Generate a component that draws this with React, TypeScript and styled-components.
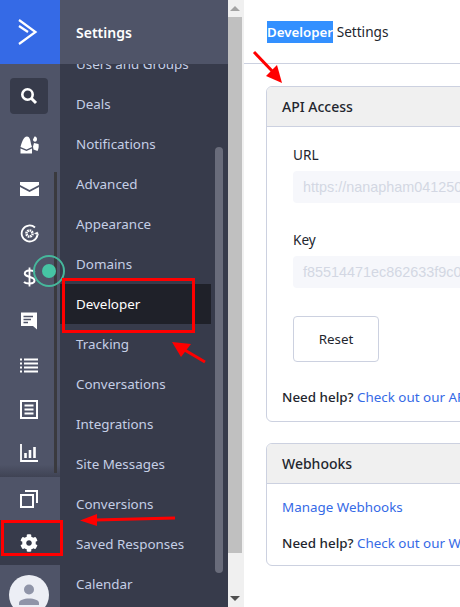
import React from "react";
import styled, { createGlobalStyle } from "styled-components";
import { FaCog } from "react-icons/fa";

const Global = createGlobalStyle`
  html, body { margin: 0; padding: 0; width: 460px; height: 607px; overflow: hidden; background: #fff; }
  * { box-sizing: border-box; }
  body { font-family: "Noto Sans", "Open Sans", sans-serif; }
`;

const Page = styled.div`
  position: relative;
  display: flex;
  width: 460px;
  height: 607px;
  overflow: hidden;
`;

const Rail = styled.nav`
  position: relative;
  z-index: 2;
  flex: 0 0 60px;
  display: flex;
  flex-direction: column;
  background: #4f5468;
`;

const Logo = styled.div`
  flex: none;
  height: 64px;
  background: #356ae6;
  display: flex;
  align-items: center;
  justify-content: center;
  padding-right: 4px;
`;

const RailTop = styled.div`
  flex: 0 0 413px;
  display: flex;
  flex-direction: column;
  align-items: center;
  padding-top: 14px;
  padding-right: 2px;
  background: linear-gradient(#4f5468 97%, #3f4354);
`;

const SearchBox = styled.div`
  flex: none;
  width: 38px;
  height: 36px;
  background: #373b4b;
  border-radius: 4px;
  display: flex;
  align-items: center;
  justify-content: center;
  margin-bottom: 9px;
`;

const RailIcon = styled.div`
  flex: none;
  width: 100%;
  height: 44px;
  display: flex;
  align-items: center;
  justify-content: center;
  color: #fff;
`;

const RailScroll = styled.div`
  position: absolute;
  left: 54px;
  top: 172px;
  width: 3px;
  height: 301px;
  background: #3a3a3e;
`;

const Pages = styled.div`
  flex: none;
  height: 43px;
  padding-right: 2px;
  display: flex;
  align-items: center;
  justify-content: center;
`;

const Cog = styled.div`
  flex: none;
  height: 45px;
  padding-right: 2px;
  background: #373b4b;
  color: #fff;
  display: flex;
  align-items: center;
  justify-content: center;
`;

const AvatarCell = styled.div`
  flex: 1;
  min-height: 0;
  display: flex;
  justify-content: center;
  padding: 10px 2px 0 0;
  overflow: hidden;
`;

const Avatar = styled.div`
  flex: 0 0 40px;
  height: 40px;
  border-radius: 50%;
  background: #eceef5;
  display: flex;
  align-items: center;
  justify-content: center;
`;

const Pulse = styled.div`
  position: absolute;
  left: 33px;
  top: 255px;
  width: 32px;
  height: 32px;
  border: 2px solid #46b89c;
  border-radius: 50%;
  display: flex;
  align-items: center;
  justify-content: center;
  &::after {
    content: "";
    width: 14px;
    height: 14px;
    border-radius: 50%;
    background: #46c5a4;
  }
`;

const Side = styled.aside`
  position: relative;
  flex: 0 0 168px;
  display: flex;
  flex-direction: column;
  background: #373b4b;
  overflow: hidden;
`;

const SideHead = styled.div`
  height: 64px;
  flex: none;
  background: #4f5468;
  color: #fff;
  font-size: 14px;
  font-weight: 600;
  display: flex;
  align-items: center;
  padding-left: 16px;
  position: relative;
  z-index: 1;
`;

const SideList = styled.ul`
  list-style: none;
  margin: -20px 0 0;
  padding: 0 17px 0 0;
`;

const SideItem = styled.li<{ $active?: boolean }>`
  height: 40px;
  line-height: 40px;
  padding-left: 16px;
  font-size: 13.4px;
  white-space: nowrap;
  color: ${(p) => (p.$active ? "#fff" : "#c5cfe6")};
  background: ${(p) => (p.$active ? "#1f2129" : "transparent")};
`;

const SideScroll = styled.div`
  position: absolute;
  left: 155px;
  top: 147px;
  width: 8px;
  height: 426px;
  border-radius: 4px;
  background: #696c7b;
`;

const PageBar = styled.div`
  flex: 0 0 16px;
  display: flex;
  flex-direction: column;
  background: #f0f0f0;
  padding-right: 2px;
`;

const BarBtn = styled.div`
  height: 17px;
  flex: none;
  display: flex;
  align-items: center;
  justify-content: center;
`;

const BarThumb = styled.div`
  height: 536px;
  flex: none;
  background: #c0c0c0;
`;

const BarTrack = styled.div`
  flex: 1;
`;

const Main = styled.main`
  flex: 1;
  min-width: 0;
  overflow: hidden;
  background: #fff;
  color: #23262e;
  font-size: 13.4px;
`;

const TopBar = styled.header`
  height: 64px;
  border-bottom: 1px solid #ccd1e0;
  padding-left: 23px;
  display: flex;
  align-items: center;
  font-size: 13.6px;
  white-space: pre;
`;

const Selected = styled.span`
  background: #3390ff;
  color: #fff;
  font-size: 13.3px;
  font-weight: 600;
  height: 22px;
  line-height: 22px;
`;

const Panels = styled.div`
  padding: 22px 0 0 22px;
  width: 700px;
  display: flex;
  flex-direction: column;
  gap: 21px;
`;

const Panel = styled.section`
  border: 1px solid #ccd1e0;
  border-radius: 6px;
  overflow: hidden;
`;

const PanelHead = styled.div`
  height: 40px;
  background: #f0f0f0;
  border-bottom: 1px solid #ccd1e0;
  padding-left: 15px;
  display: flex;
  align-items: center;
  font-size: 14px;
  font-weight: 500;
`;

const ApiBody = styled.div`
  padding: 17px 15px 0;
  height: 294px;
`;

const Fields = styled.div`
  padding-left: 11px;
  display: flex;
  flex-direction: column;
  align-items: flex-start;
`;

const Label = styled.label`
  height: 22px;
  line-height: 22px;
  margin-bottom: 5px;
  font-size: 13.6px;
`;

const ReadOnly = styled.div`
  width: 400px;
  height: 32px;
  line-height: 32px;
  background: #f6f7fb;
  border-radius: 4px;
  padding-left: 10px;
  color: #d3d7e3;
  font-family: "Liberation Sans", sans-serif;
  font-size: 14.4px;
  margin-bottom: 26px;
  white-space: nowrap;
`;

const ResetBtn = styled.button`
  width: 86px;
  height: 46px;
  margin-top: 2px;
  background: #fff;
  border: 1px solid #ccd1e0;
  border-radius: 4px;
  color: #23262e;
  font: inherit;
  font-size: 13.4px;
`;

const Help = styled.p`
  margin: 0;
  font-weight: 500;
  font-size: 13.4px;
  white-space: nowrap;
`;

const ApiHelp = styled(Help)`
  margin-top: 26px;
`;

const HelpLink = styled.a`
  color: #356ae6;
  font-weight: 400;
`;

const HookBody = styled.div`
  padding: 14px 15px 0;
  height: 81px;
`;

const HookLink = styled.a`
  display: block;
  color: #356ae6;
  margin-bottom: 18px;
  height: 18px;
  line-height: 18px;
`;

const Overlay = styled.svg`
  position: absolute;
  z-index: 3;
  left: 0;
  top: 0;
  pointer-events: none;
`;

const items = ["Users and Groups","Deals","Notifications","Advanced","Appearance","Domains","Developer","Tracking","Conversations","Integrations","Site Messages","Conversions","Saved Responses","Calendar"];

export default function App() {
  return (
    <Page>
      <Global />
      <Rail>
        <Logo>
          <svg width="20" height="26" viewBox="0 0 20 26" fill="none" stroke="#fff" strokeWidth="2.2">
            <path d="M1 1 L17.5 13 L1 25" />
            <path d="M1 7 L10 13" />
          </svg>
        </Logo>
        <RailTop>
          <SearchBox>
            <svg width="18" height="18" viewBox="0 0 18 18" fill="none" stroke="#fff">
              <circle cx="7.5" cy="7.5" r="5.2" strokeWidth="2.6" />
              <path d="M11.5 11.5 L16 16" strokeWidth="3" />
            </svg>
          </SearchBox>
          <RailIcon>
            <svg width="19" height="18" viewBox="0 0 19 18" fill="#fff">
              <path d="M7 0.5 C9.5 0.5 10.5 4 11 8 L12 11 L6.5 13.5 L0.5 11 C1.5 7 3.5 0.5 7 0.5 Z" />
              <path d="M14.5 0.5 C17 0.5 17.5 3 16.5 5 C15 6.5 13 5.5 13 3.5 Z" />
              <path d="M14 7 L18.5 8 C19 10.5 18.5 13 17.5 15 L13.5 13.5 L13 10.5 Z" />
              <path d="M0.5 12.5 L6.5 15 L12 12.5 L12 17.5 L0.5 17.5 Z" />
            </svg>
          </RailIcon>
          <RailIcon>
            <svg width="19" height="14" viewBox="0 0 19 14" fill="#fff">
              <path d="M0 0 H19 V3 L9.5 8 L0 3 Z" />
              <path d="M0 5 L9.5 10 L19 5 V14 H0 Z" />
            </svg>
          </RailIcon>
          <RailIcon>
            <svg width="19" height="19" viewBox="0 0 19 19" fill="none" stroke="#fff" strokeWidth="1.8">
              <path d="M15 3.5 A8 8 0 1 0 17.5 11" />
              <circle cx="9.5" cy="9.5" r="3" strokeWidth="2.6" strokeDasharray="1.6 0.7" />
              <path d="M14.5 9.5 L17.5 8 L18.5 11 Z" fill="#fff" strokeWidth="0.5" />
            </svg>
          </RailIcon>
          <RailIcon>
            <svg width="13" height="20" viewBox="0 0 13 20" fill="none" stroke="#fff" strokeWidth="2">
              <path d="M11.5 5 C10.5 3 2 2.5 1.8 6.5 C1.5 10.5 11.5 8.8 11.5 13.5 C11.5 17.5 3 17 1 15" />
              <path d="M6.5 0.5 V19.5" strokeWidth="1.8" />
            </svg>
          </RailIcon>
          <RailIcon>
            <svg width="18" height="18" viewBox="0 0 18 18">
              <path fill="#fff" d="M1 0.5 H17 V17.5 L13 14 H1 Z" />
              <path d="M3.5 4.5 H13 M3.5 7.5 H11 M3.5 10.5 H8" stroke="#4f5468" strokeWidth="1.6" />
            </svg>
          </RailIcon>
          <RailIcon>
            <svg width="18" height="15" viewBox="0 0 18 15" stroke="#fff" strokeWidth="2">
              <path d="M4 1.5 H18 M4 5.5 H18 M4 9.5 H18 M4 13.5 H18" />
              <path d="M0 1.5 H2 M0 5.5 H2 M0 9.5 H2 M0 13.5 H2" />
            </svg>
          </RailIcon>
          <RailIcon>
            <svg width="18" height="19" viewBox="0 0 18 19" fill="none" stroke="#fff" strokeWidth="2">
              <rect x="1" y="1" width="16" height="17" />
              <path d="M4.5 5.5 H13.5 M4.5 9.5 H13.5 M4.5 13.5 H13.5" />
            </svg>
          </RailIcon>
          <RailIcon>
            <svg width="18" height="18" viewBox="0 0 18 18" fill="none" stroke="#fff">
              <path d="M1 0 V17 H18" strokeWidth="1.8" />
              <path d="M5.5 9 V14 M10 6 V14 M14.5 3 V14" strokeWidth="2.6" />
            </svg>
          </RailIcon>
        </RailTop>
        <Pages>
          <svg width="18" height="18" viewBox="0 0 18 18" fill="none" stroke="#fff" strokeWidth="2">
            <rect x="1" y="5" width="12" height="12" />
            <path d="M5 1 H17 V13" />
          </svg>
        </Pages>
        <Cog>
          <FaCog size={18} />
        </Cog>
        <AvatarCell>
          <Avatar>
            <svg width="20" height="22" viewBox="0 0 20 22" fill="#8f94a8">
              <circle cx="10" cy="5.5" r="5" />
              <path d="M0 19 C0 13 20 13 20 19 V21 H0 Z" />
            </svg>
          </Avatar>
        </AvatarCell>
        <RailScroll />
        <Pulse />
      </Rail>
      <Side>
        <SideHead>Settings</SideHead>
        <SideList>
          {items.map((i) => (
            <SideItem key={i} $active={i === "Developer"}>{i}</SideItem>
          ))}
        </SideList>
        <SideScroll />
      </Side>
      <PageBar>
        <BarBtn>
          <svg width="10" height="6" viewBox="0 0 10 6" fill="#a3a3a3"><path d="M5 0 L10 5 H0 Z" /></svg>
        </BarBtn>
        <BarThumb />
        <BarTrack />
        <BarBtn>
          <svg width="10" height="6" viewBox="0 0 10 6" fill="#505050"><path d="M0 0 H10 L5 5 Z" /></svg>
        </BarBtn>
      </PageBar>
      <Main>
        <TopBar><Selected>Developer</Selected> Settings</TopBar>
        <Panels>
          <Panel>
            <PanelHead>API Access</PanelHead>
            <ApiBody>
              <Fields>
                <Label>URL</Label>
                <ReadOnly>https://nanapham041250.api-us1.com</ReadOnly>
                <Label>Key</Label>
                <ReadOnly>f85514471ec862633f9c0a1b7d</ReadOnly>
                <ResetBtn>Reset</ResetBtn>
              </Fields>
              <ApiHelp>Need help? <HelpLink>Check out our API documentation</HelpLink></ApiHelp>
            </ApiBody>
          </Panel>
          <Panel>
            <PanelHead>Webhooks</PanelHead>
            <HookBody>
              <HookLink>Manage Webhooks</HookLink>
              <Help>Need help? <HelpLink>Check out our Webhooks guide</HelpLink></Help>
            </HookBody>
          </Panel>
        </Panels>
      </Main>
      <Overlay width="460" height="607" viewBox="0 0 460 607" fill="none">
        <rect x="63.5" y="279.5" width="130" height="52" stroke="#f00" strokeWidth="3" />
        <rect x="2.5" y="521.5" width="59" height="33" stroke="#f00" strokeWidth="3" />
        <path d="M205 362 L183 349" stroke="#f00" strokeWidth="3" />
        <path d="M172 342 L191 344 L181 357 Z" fill="#f00" />
        <path d="M175 518 L95 520" stroke="#f00" strokeWidth="3" />
        <path d="M80 520.5 L97 514 L97 526 Z" fill="#f00" />
        <path d="M254 52 L275 74" stroke="#f00" strokeWidth="3" />
        <path d="M282 83 L266 76 L277 65 Z" fill="#f00" />
      </Overlay>
    </Page>
  );
}
